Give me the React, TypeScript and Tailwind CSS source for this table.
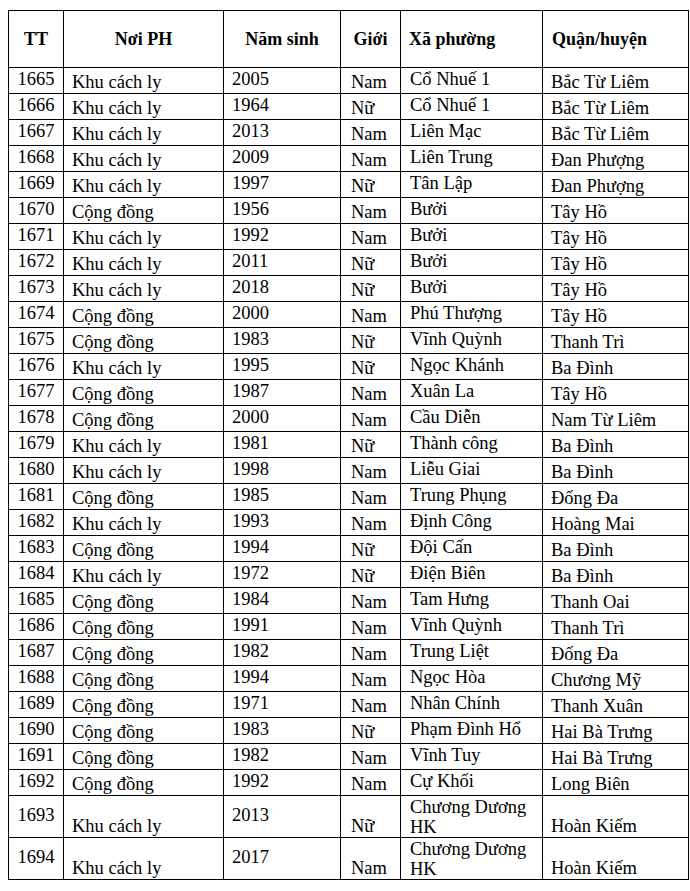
type Row = {
  tt: number;
  noi: string;
  nam: number;
  gioi: "Nam" | "Nữ";
  xa: string;
  quan: string;
};

const rows: Row[] = [
  { tt: 1665, noi: "Khu cách ly", nam: 2005, gioi: "Nam", xa: "Cổ Nhuế 1", quan: "Bắc Từ Liêm" },
  { tt: 1666, noi: "Khu cách ly", nam: 1964, gioi: "Nữ", xa: "Cổ Nhuế 1", quan: "Bắc Từ Liêm" },
  { tt: 1667, noi: "Khu cách ly", nam: 2013, gioi: "Nam", xa: "Liên Mạc", quan: "Bắc Từ Liêm" },
  { tt: 1668, noi: "Khu cách ly", nam: 2009, gioi: "Nam", xa: "Liên Trung", quan: "Đan Phượng" },
  { tt: 1669, noi: "Khu cách ly", nam: 1997, gioi: "Nữ", xa: "Tân Lập", quan: "Đan Phượng" },
  { tt: 1670, noi: "Cộng đồng", nam: 1956, gioi: "Nam", xa: "Bưởi", quan: "Tây Hồ" },
  { tt: 1671, noi: "Khu cách ly", nam: 1992, gioi: "Nam", xa: "Bưởi", quan: "Tây Hồ" },
  { tt: 1672, noi: "Khu cách ly", nam: 2011, gioi: "Nữ", xa: "Bưởi", quan: "Tây Hồ" },
  { tt: 1673, noi: "Khu cách ly", nam: 2018, gioi: "Nữ", xa: "Bưởi", quan: "Tây Hồ" },
  { tt: 1674, noi: "Cộng đồng", nam: 2000, gioi: "Nam", xa: "Phú Thượng", quan: "Tây Hồ" },
  { tt: 1675, noi: "Cộng đồng", nam: 1983, gioi: "Nữ", xa: "Vĩnh Quỳnh", quan: "Thanh Trì" },
  { tt: 1676, noi: "Khu cách ly", nam: 1995, gioi: "Nữ", xa: "Ngọc Khánh", quan: "Ba Đình" },
  { tt: 1677, noi: "Cộng đồng", nam: 1987, gioi: "Nam", xa: "Xuân La", quan: "Tây Hồ" },
  { tt: 1678, noi: "Cộng đồng", nam: 2000, gioi: "Nam", xa: "Cầu Diễn", quan: "Nam Từ Liêm" },
  { tt: 1679, noi: "Khu cách ly", nam: 1981, gioi: "Nữ", xa: "Thành công", quan: "Ba Đình" },
  { tt: 1680, noi: "Khu cách ly", nam: 1998, gioi: "Nam", xa: "Liễu Giai", quan: "Ba Đình" },
  { tt: 1681, noi: "Cộng đồng", nam: 1985, gioi: "Nam", xa: "Trung Phụng", quan: "Đống Đa" },
  { tt: 1682, noi: "Khu cách ly", nam: 1993, gioi: "Nam", xa: "Định Công", quan: "Hoàng Mai" },
  { tt: 1683, noi: "Cộng đồng", nam: 1994, gioi: "Nữ", xa: "Đội Cấn", quan: "Ba Đình" },
  { tt: 1684, noi: "Khu cách ly", nam: 1972, gioi: "Nữ", xa: "Điện Biên", quan: "Ba Đình" },
  { tt: 1685, noi: "Cộng đồng", nam: 1984, gioi: "Nam", xa: "Tam Hưng", quan: "Thanh Oai" },
  { tt: 1686, noi: "Cộng đồng", nam: 1991, gioi: "Nam", xa: "Vĩnh Quỳnh", quan: "Thanh Trì" },
  { tt: 1687, noi: "Cộng đồng", nam: 1982, gioi: "Nam", xa: "Trung Liệt", quan: "Đống Đa" },
  { tt: 1688, noi: "Cộng đồng", nam: 1994, gioi: "Nam", xa: "Ngọc Hòa", quan: "Chương Mỹ" },
  { tt: 1689, noi: "Cộng đồng", nam: 1971, gioi: "Nam", xa: "Nhân Chính", quan: "Thanh Xuân" },
  { tt: 1690, noi: "Cộng đồng", nam: 1983, gioi: "Nữ", xa: "Phạm Đình Hổ", quan: "Hai Bà Trưng" },
  { tt: 1691, noi: "Cộng đồng", nam: 1982, gioi: "Nam", xa: "Vĩnh Tuy", quan: "Hai Bà Trưng" },
  { tt: 1692, noi: "Cộng đồng", nam: 1992, gioi: "Nam", xa: "Cự Khối", quan: "Long Biên" },
  { tt: 1693, noi: "Khu cách ly", nam: 2013, gioi: "Nữ", xa: "Chương Dương HK", quan: "Hoàn Kiếm" },
  { tt: 1694, noi: "Khu cách ly", nam: 2017, gioi: "Nam", xa: "Chương Dương HK", quan: "Hoàn Kiếm" },
];

const cell = "border border-black p-0 leading-[20px]";

export default function App() {
  return (
    <div className="bg-white min-h-[891px] pt-[10px] pl-[8px] text-black font-['Liberation_Serif','Times_New_Roman',serif] text-[18.5px]">
      <table className="table-fixed border-collapse w-[680px]">
        <colgroup>
          <col className="w-[55px]" />
          <col className="w-[160px]" />
          <col className="w-[117px]" />
          <col className="w-[60px]" />
          <col className="w-[142px]" />
          <col className="w-[146px]" />
        </colgroup>
        <thead>
          <tr className="h-[57px] font-bold text-[18px]">
            <th className={`${cell} text-center align-middle`}>TT</th>
            <th className={`${cell} text-center align-middle`}>Nơi PH</th>
            <th className={`${cell} text-center align-middle`}>Năm sinh</th>
            <th className={`${cell} text-center align-middle`}>Giới</th>
            <th className={`${cell} text-left align-middle pl-[8px]`}>Xã phường</th>
            <th className={`${cell} text-left align-middle pl-[9px]`}>Quận/huyện</th>
          </tr>
        </thead>
        <tbody>
          {rows.map((r) => (
            <tr key={r.tt} className="h-[26px]">
              <td className={`${cell} text-center align-middle pb-[3px]`}>{r.tt}</td>
              <td className={`${cell} align-bottom pl-[8px] leading-[21px]`}>{r.noi}</td>
              <td className={`${cell} align-middle pl-[8px] pb-[3px]`}>{r.nam}</td>
              <td className={`${cell} align-bottom pl-[10px] leading-[21px]`}>{r.gioi}</td>
              <td className={`${cell} align-top pl-[9px] pr-[4px] pt-[1px] leading-[19px]`}>{r.xa}</td>
              <td className={`${cell} align-bottom pl-[8px] leading-[21px]`}>{r.quan}</td>
            </tr>
          ))}
        </tbody>
      </table>
    </div>
  );
}
